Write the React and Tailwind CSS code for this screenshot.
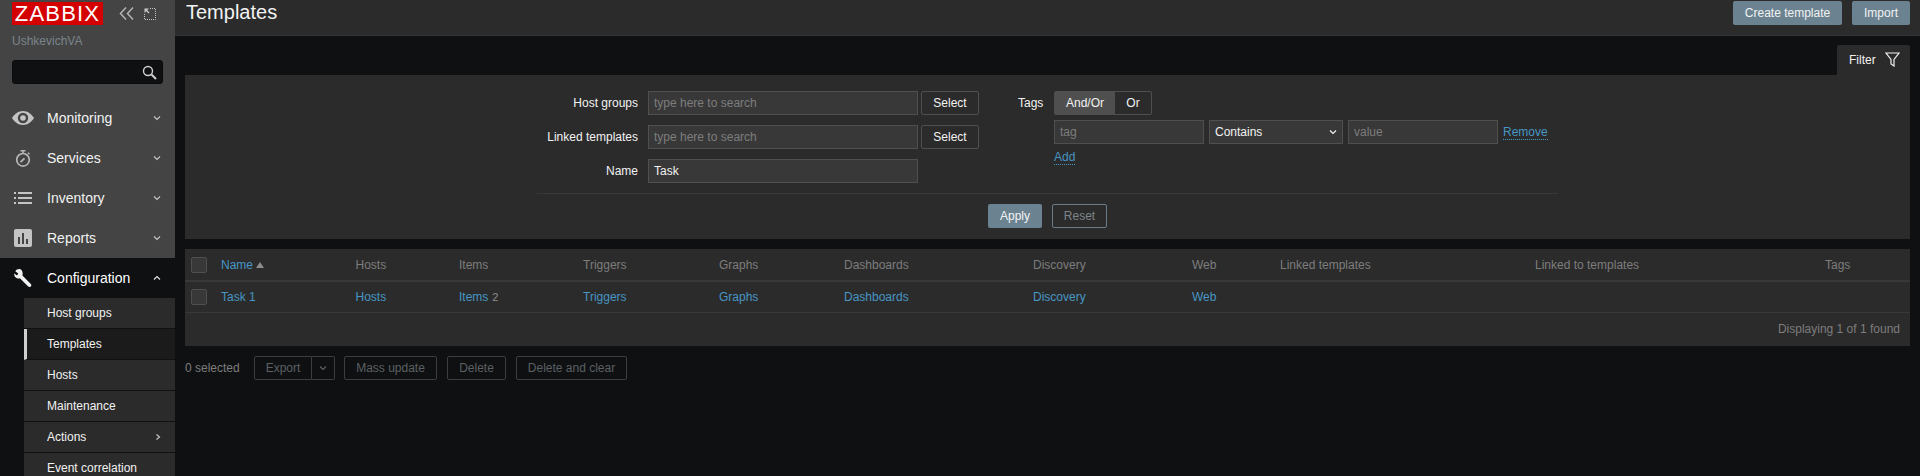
import React from 'react';

const font = { fontFamily: '"Liberation Sans", Arial, sans-serif' };

const Chevron = ({ dir = 'down', className = '' }) => {
  const d = {
    down: 'M1 1.5 L4 4.5 L7 1.5',
    up: 'M1 4.5 L4 1.5 L7 4.5',
    right: 'M2.5 0.5 L5.5 3 L2.5 5.5',
  }[dir];
  return (
    <svg width="8" height="6" viewBox="0 0 8 6" fill="none" stroke="currentColor" strokeWidth="1.2" className={className}>
      <path d={d} />
    </svg>
  );
};

const EyeIcon = () => (
  <svg width="22" height="16" viewBox="0 0 22 16" fill="#c4c4c4">
    <path fillRule="evenodd" d="M11 1C6.500 1 2.500 3.800 0 8c2.500 4.200 6.500 7 11 7s8.500-2.800 11-7c-2.500-4.200-6.500-7-11-7zm0 1.800a5.200 5.200 0 1 1 0 10.400 5.200 5.200 0 0 1 0-10.400zm0 2.400a2.800 2.800 0 1 0 0 5.600 2.800 2.800 0 0 0 0-5.600z" />
  </svg>
);

const TimerIcon = () => (
  <svg width="16" height="17" viewBox="0 0 16 17" fill="none" stroke="#b8b8b8">
    <circle cx="8" cy="9.800" r="6.300" strokeWidth="1.700" />
    <path d="M5.500 0.800h5M8 0.800v2.500" strokeWidth="1.500" />
    <path d="M13 2.800l1.400 1.400" strokeWidth="1.500" />
    <path d="M5.500 12.200l4-3.800" strokeWidth="1.800" />
  </svg>
);

const ListIcon = () => (
  <svg width="18" height="12" viewBox="0 0 18 12" fill="#c4c4c4">
    <rect x="0" y="0" width="2" height="2" />
    <rect x="4" y="0" width="14" height="2" />
    <rect x="0" y="5" width="2" height="2" />
    <rect x="4" y="5" width="14" height="2" />
    <rect x="0" y="10" width="2" height="2" />
    <rect x="4" y="10" width="14" height="2" />
  </svg>
);

const ReportIcon = () => (
  <svg width="18" height="18" viewBox="0 0 18 18">
    <rect width="18" height="18" rx="2" fill="#c4c4c4" />
    <rect x="4" y="8" width="2" height="7" fill="#444" />
    <rect x="8" y="4" width="2" height="11" fill="#444" />
    <rect x="12" y="10" width="2" height="5" fill="#444" />
  </svg>
);

const WrenchIcon = () => (
  <svg width="18" height="18" viewBox="0 0 18 18" fill="#f2f2f2">
    <path d="M6.500 0.300C4.600-0.300 2.400 0.400 1.300 2.200l3 2.200-1.300 2-2.700-2C-.2 6.400 1 8.600 3 9.300c1 .3 2 .3 2.900-.1l8.300 8.300c.8.700 1.900.7 2.600 0s.7-1.800 0-2.500L8.400 6.600c.7-2.600 0-5.400-1.900-6.300z" />
  </svg>
);

const mainMenu = [
  { label: 'Monitoring', icon: <EyeIcon /> },
  { label: 'Services', icon: <TimerIcon /> },
  { label: 'Inventory', icon: <ListIcon /> },
  { label: 'Reports', icon: <ReportIcon /> },
];

const subMenu = [
  { label: 'Host groups' },
  { label: 'Templates', active: true },
  { label: 'Hosts' },
  { label: 'Maintenance' },
  { label: 'Actions', arrow: true },
  { label: 'Event correlation' },
];

const Sidebar = () => (
  <aside className="w-[175px] shrink-0 bg-[#444444] flex flex-col overflow-hidden">
    <div className="flex items-center shrink-0 pl-3 pt-[2px] h-[25px]">
      <div className="w-[91px] h-[23px] shrink-0 bg-[#d40000] text-white text-[22px] leading-[23px] text-center tracking-[1.2px] font-normal">ZABBIX</div>
      <svg width="15" height="13" viewBox="0 0 15 13" fill="none" stroke="#b4b4b4" strokeWidth="1.500" className="ml-[16px]">
        <path d="M7 .5L1.500 6.500 7 12.500M14 .5L8.500 6.500 14 12.500" />
      </svg>
      <svg width="12" height="12" viewBox="0 0 12 12" fill="none" stroke="#c4c4c4" className="ml-[10px]">
        <path d="M6 .5h5.500V11.500H.5V6" strokeDasharray="1 1" />
        <path d="M1 1l4 4" strokeWidth="1.400" />
        <path d="M.5.5h4.500L.5 5z" fill="#c4c4c4" stroke="none" />
      </svg>
    </div>
    <div className="pl-3 mt-[9px] shrink-0 text-[12px] leading-[14px] text-[#7a858b]">UshkevichVA</div>
    <div className="mx-3 mt-[12px] h-[24px] shrink-0 bg-[#0e1012] border border-[#0a0b0c] rounded-[3px] flex items-center justify-end pr-[5px]">
      <svg width="15" height="15" viewBox="0 0 15 15" fill="none" stroke="#d0d0d0">
        <circle cx="6" cy="6" r="4.500" strokeWidth="1.400" />
        <path d="M9.500 9.500l4.500 4.500" strokeWidth="2" />
      </svg>
    </div>
    <nav className="mt-[14px] flex flex-col flex-1 min-h-0">
      {mainMenu.map((item) => (
        <div key={item.label} className="h-[40px] shrink-0 flex items-center text-[14px] text-[#f2f2f2]">
          <div className="w-[47px] flex justify-center pr-[1px]">{item.icon}</div>
          <span>{item.label}</span>
          <Chevron className="ml-auto mr-[14px] text-[#c4c4c4]" />
        </div>
      ))}
      <div className="bg-[#0e1012] flex-1">
        <div className="h-[40px] flex items-center text-[14px] text-white">
          <div className="w-[47px] flex justify-center pr-[1px]">
            <WrenchIcon />
          </div>
          <span>Configuration</span>
          <Chevron dir="up" className="ml-auto mr-[14px] text-[#e0e0e0]" />
        </div>
        <div className="ml-6 flex flex-col">
          {subMenu.map((item) => (
            <div
              key={item.label}
              className={`h-[31px] shrink-0 flex items-center pl-[23px] text-[12px] text-[#f2f2f2] border-b border-[#0e1012] ${
                item.active ? 'bg-[#1b1b1b] border-l-[3px] border-l-[#d0d0d0] !pl-[20px]' : 'bg-[#2b2b2b]'
              }`}
            >
              <span>{item.label}</span>
              {item.arrow && <Chevron dir="right" className="ml-auto mr-[13px] text-[#c4c4c4]" />}
            </div>
          ))}
        </div>
      </div>
    </nav>
  </aside>
);

const inputCls = 'h-[24px] bg-[#383838] border border-[#4f4f4f] px-[5px] text-[12px] flex items-center';

const SelectBtn = () => (
  <div className="w-[58px] h-[24px] ml-[3px] rounded-[2px] border border-[#4f4f4f] bg-[#2b2b2b] text-[#f2f2f2] text-[12px] flex items-center justify-center">Select</div>
);

const FilterField = ({ label, value, placeholder, select }) => (
  <div className="flex items-center h-[24px]">
    <div className="w-[177px] text-right pr-[10px] text-[#f2f2f2] text-[12px]">{label}</div>
    <div className={`${inputCls} w-[270px] ${placeholder ? 'text-[#7d7d7d]' : 'text-[#f2f2f2]'}`}>{value || placeholder}</div>
    {select && <SelectBtn />}
  </div>
);

const FilterPanel = () => (
  <div className="bg-[#2b2b2b] h-[164px] pt-[16px]">
    <div className="flex ml-[286px] h-[102px]">
      <div className="flex flex-col gap-[10px]">
        <FilterField label="Host groups" placeholder="type here to search" select />
        <FilterField label="Linked templates" placeholder="type here to search" select />
        <FilterField label="Name" value="Task" />
      </div>
      <div className="ml-[39px] flex">
        <div className="text-[#f2f2f2] text-[12px] h-[24px] leading-[24px] w-[36px]">Tags</div>
        <div className="flex flex-col">
          <div className="flex h-[24px] w-[98px] rounded-[2px] border border-[#4f4f4f] text-[12px] text-[#f2f2f2]">
            <div className="w-[60px] bg-[#4f4f4f] flex items-center justify-center">And/Or</div>
            <div className="flex-1 flex items-center justify-center">Or</div>
          </div>
          <div className="flex items-center mt-[5px]">
            <div className={`${inputCls} w-[150px] text-[#7d7d7d]`}>tag</div>
            <div className={`${inputCls} w-[134px] ml-[5px] text-[#f2f2f2] justify-between`}>
              <span>Contains</span>
              <Chevron className="text-[#f2f2f2]" />
            </div>
            <div className={`${inputCls} w-[150px] ml-[5px] text-[#7d7d7d]`}>value</div>
            <a className="ml-[5px] text-[12px] text-[#4796c4] border-b border-dotted border-[#4796c4] leading-[14px]">Remove</a>
          </div>
          <div className="mt-[6px] leading-[14px]">
            <a className="text-[12px] text-[#4796c4] border-b border-dotted border-[#4796c4] leading-[14px] block w-fit">Add</a>
          </div>
        </div>
      </div>
    </div>
    <div className="ml-[352px] w-[1021px] border-t border-[#383838] flex justify-center pt-[10px] gap-[10px]">
      <div className="w-[54px] h-[24px] rounded-[2px] bg-[#6b8391] text-[#f2f2f2] text-[12px] flex items-center justify-center">Apply</div>
      <div className="w-[55px] h-[24px] rounded-[2px] border border-[#697c87] text-[#7d8589] text-[12px] flex items-center justify-center">Reset</div>
    </div>
  </div>
);

const columns = 'grid grid-cols-[36px_134.500px_103.500px_124px_136px_125px_189px_159px_88px_255px_290px_1fr]';

const headers = ['Hosts', 'Items', 'Triggers', 'Graphs', 'Dashboards', 'Discovery', 'Web', 'Linked templates', 'Linked to templates', 'Tags'];
const links = ['Hosts', 'Items', 'Triggers', 'Graphs', 'Dashboards', 'Discovery', 'Web'];

const Checkbox = () => <div className="ml-[6px] w-[16px] h-[16px] rounded-[2px] border border-[#4f4f4f] bg-[#383838]" />;

const Table = () => (
  <div className="bg-[#2b2b2b] mt-[10px] h-[97px] text-[12px]">
    <div className={`${columns} h-[33px] items-center border-b-2 border-[#383838]`}>
      <Checkbox />
      <div className="flex items-center text-[#4796c4]">
        Name
        <svg width="8" height="6" viewBox="0 0 8 6" fill="#8c8c8c" className="ml-[3px] mt-[1px]"><path d="M0 6L4 0l4 6z" /></svg>
      </div>
      {headers.map((h) => <div key={h} className="text-[#7d7d7d]">{h}</div>)}
    </div>
    <div className={`${columns} h-[31px] items-center border-b border-[#383838]`}>
      <Checkbox />
      <a className="text-[#4796c4]">Task 1</a>
      {links.map((l) => (
        <div key={l}>
          <a className="text-[#4796c4]">{l}</a>
          {l === 'Items' && <span className="text-[#8c8c8c] text-[11px] ml-[4px]">2</span>}
        </div>
      ))}
    </div>
    <div className="h-[33px] flex items-center justify-end pr-[10px] pb-[2px] text-[#7d7d7d]">Displaying 1 of 1 found</div>
  </div>
);

const DisabledBtn = ({ children, className = '' }) => (
  <div className={`h-[24px] rounded-[2px] border border-[#3d3d3d] text-[#5c6063] text-[12px] flex items-center justify-center ${className}`}>{children}</div>
);

const Actions = () => (
  <div className="flex items-center mt-[10px] h-[24px]">
    <span className="text-[12px] text-[#7d7d7d] w-[69px]">0 selected</span>
    <DisabledBtn className="w-[58px] rounded-r-none">Export</DisabledBtn>
    <DisabledBtn className="w-[23px] rounded-l-none border-l-0">
      <Chevron />
    </DisabledBtn>
    <DisabledBtn className="w-[93px] ml-[9px]">Mass update</DisabledBtn>
    <DisabledBtn className="w-[59px] ml-[10px]">Delete</DisabledBtn>
    <DisabledBtn className="w-[111px] ml-[10px]">Delete and clear</DisabledBtn>
  </div>
);

const App = () => (
  <div className="h-screen flex bg-[#0e1012] overflow-hidden" style={font}>
    <Sidebar />
    <main className="flex-1 flex flex-col min-w-0">
      <header className="h-[36px] shrink-0 bg-[#2b2b2b] flex items-start pl-[11px] pr-[10px] pt-[1px] border-b border-[#333333]">
        <h1 className="text-[20px] leading-[22px] text-[#f2f2f2] font-normal">Templates</h1>
        <div className="ml-auto w-[109px] h-[24px] rounded-[2px] bg-[#6b8391] text-[#f2f2f2] text-[12px] flex items-center justify-center">Create template</div>
        <div className="ml-[10px] w-[58px] h-[24px] rounded-[2px] bg-[#6b8391] text-[#f2f2f2] text-[12px] flex items-center justify-center">Import</div>
      </header>
      <div className="px-[10px] pt-[9px]">
        <div className="flex justify-end">
          <div className="w-[73px] h-[30px] bg-[#2b2b2b] rounded-t-[2px] flex items-center pl-[12px] text-[12px] text-[#f2f2f2]">
            Filter
            <svg width="15" height="15" viewBox="0 0 15 15" fill="none" stroke="#f2f2f2" strokeWidth="1.200" className="ml-[9px] mb-[2px]">
              <path d="M1 1h13L9 7.500V14L6 12V7.500z" />
            </svg>
          </div>
        </div>
        <FilterPanel />
        <Table />
        <Actions />
      </div>
    </main>
  </div>
);

export default App;
